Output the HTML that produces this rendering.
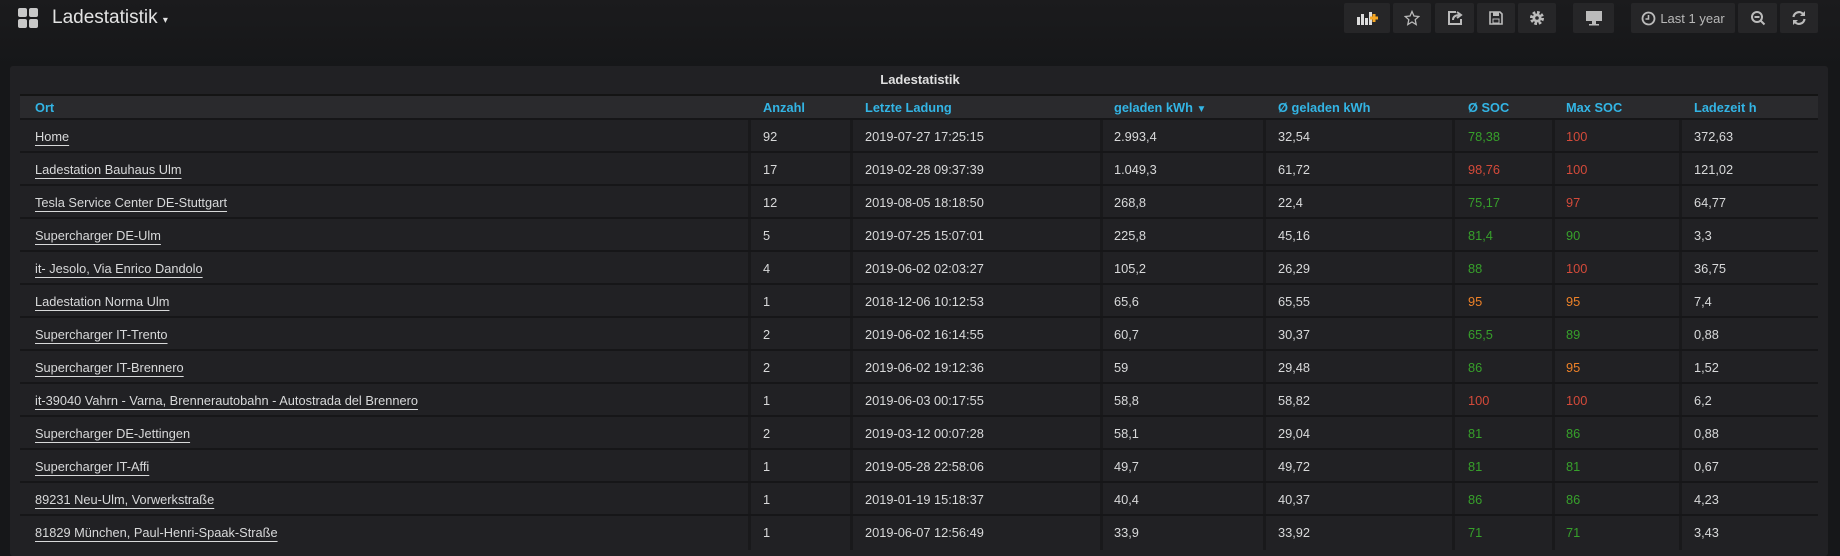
<!DOCTYPE html>
<html><head><meta charset="utf-8"><style>
*{margin:0;padding:0;box-sizing:border-box}
body{width:1840px;height:548px;overflow:hidden;background:#161719;font-family:"Liberation Sans",sans-serif;color:#d8d9da;position:relative}
.top{position:absolute;left:0;top:0;width:1840px;height:66px;background:linear-gradient(#1b1b1d,#161719)}
.logo{position:absolute;left:18px;top:8px;width:20px;height:20px}
.logo i{position:absolute;width:9px;height:9px;background:#c8c8c8;border-radius:2px}
.title{position:absolute;left:52px;top:7px;font-size:19px;color:#e3e3e3}
.btn{position:absolute;top:3px;height:30px;background:#262628;border-radius:2px;color:#b8b8b8;display:flex;align-items:center;justify-content:center;font-size:14px}
.panel{position:absolute;left:10px;top:66px;width:1818px;height:490px;background:#212124;border-radius:3px}
.ptitle{position:absolute;left:0;width:100%;top:72px;text-align:center;font-size:13px;font-weight:bold;color:#e0e0e0}
.hdr{position:absolute;left:20px;top:94px;width:1798px;height:24px;background:#2a2a2d;border-top:2px solid #141414}
.h{position:absolute;top:100px;font-size:12.8px;color:#33b5e5;font-weight:bold}
.row{position:absolute;left:20px;width:1798px;height:33px;border-top:2px solid #161618}
.c{position:absolute;font-size:12.8px;top:9px}
.vs{position:absolute;top:120px;width:3px;height:430px;background:#19191b}
.o{text-decoration:underline;text-underline-offset:4px}
.g{color:#37a02b}.r{color:#d44a3a}.y{color:#ed8128}
</style></head><body>
<div class="top"></div>
<div class="logo"><i style="left:0;top:0"></i><i style="left:11px;top:0"></i><i style="left:0;top:11px"></i><i style="left:11px;top:11px"></i></div>
<div class="title">Ladestatistik <span style="font-size:10px">▾</span></div>
<div class="btn" style="left:1344px;width:46px"><svg width="24" height="16"><rect x="2" y="7" width="3" height="8" fill="#ddd"/><rect x="6" y="4" width="3" height="11" fill="#ddd"/><rect x="10" y="8" width="3" height="7" fill="#ddd"/><rect x="14" y="2" width="3" height="13" fill="#ddd"/><path d="M19 4v8M15 8h8" stroke="#f5a623" stroke-width="3"/></svg></div>
<div class="btn" style="left:1393px;width:38px"><svg width="16" height="16"><path d="M8 1.5l2 4.5 4.8.5-3.6 3.2 1 4.8L8 12l-4.2 2.5 1-4.8L1.2 6.5 6 6z" fill="none" stroke="#bbb" stroke-width="1.3"/></svg></div>
<div class="btn" style="left:1435px;width:39px"><svg width="16" height="16"><path d="M9 2h-7v12h12v-5" fill="none" stroke="#bbb" stroke-width="2"/><path d="M6 10c0-4 3-5 7-5M10 2l4 3-4 3" fill="none" stroke="#bbb" stroke-width="2"/></svg></div>
<div class="btn" style="left:1477px;width:38px"><svg width="16" height="16"><path d="M2 2h10l2 2v10H2z" fill="none" stroke="#bbb" stroke-width="1.6"/><rect x="5" y="2" width="6" height="4" fill="#bbb"/><rect x="5" y="9" width="6" height="4" fill="none" stroke="#bbb"/></svg></div>
<div class="btn" style="left:1518px;width:38px"><svg width="16" height="16"><circle cx="8" cy="8" r="5.5" fill="none" stroke="#bbb" stroke-width="3" stroke-dasharray="2.6 1.7"/><circle cx="8" cy="8" r="4.5" fill="#bbb"/><circle cx="8" cy="8" r="1.8" fill="#262628"/></svg></div>
<div class="btn" style="left:1573px;width:41px"><svg width="20" height="16"><rect x="2" y="1" width="16" height="10" fill="#bbb"/><rect x="8" y="11" width="4" height="3" fill="#bbb"/><rect x="5" y="14" width="10" height="1.5" fill="#bbb"/></svg></div>
<div class="btn" style="left:1631px;width:104px;font-size:13px"><svg width="15" height="15" style="margin-right:4px"><circle cx="7.5" cy="7.5" r="6" fill="none" stroke="#bbb" stroke-width="1.8"/><path d="M7.5 4v4h-3" fill="none" stroke="#bbb" stroke-width="1.6"/></svg>Last 1 year</div>
<div class="btn" style="left:1738px;width:39px"><svg width="16" height="16"><circle cx="7" cy="7" r="5" fill="none" stroke="#bbb" stroke-width="2"/><path d="M4.5 7h5M10.5 10.5l4 4" stroke="#bbb" stroke-width="2"/></svg></div>
<div class="btn" style="left:1780px;width:38px"><svg width="16" height="16"><path d="M2.5 7a5.5 5.5 0 0 1 10-2.5M13.5 9a5.5 5.5 0 0 1-10 2.5" fill="none" stroke="#bbb" stroke-width="2.2"/><path d="M14 1v5h-5zM2 15v-5h5z" fill="#bbb"/></svg></div>
<div class="panel"></div>
<div class="ptitle">Ladestatistik</div>
<div class="hdr"></div>
<div class="h" style="left:35px">Ort</div>
<div class="h" style="left:763px">Anzahl</div>
<div class="h" style="left:865px">Letzte Ladung</div>
<div class="h" style="left:1114px">geladen kWh <span style="font-size:10px">▼</span></div>
<div class="h" style="left:1278px">Ø geladen kWh</div>
<div class="h" style="left:1468px">Ø SOC</div>
<div class="h" style="left:1566px">Max SOC</div>
<div class="h" style="left:1694px">Ladezeit h</div>
<div class="vs" style="left:748px"></div><div class="vs" style="left:850px"></div><div class="vs" style="left:1100px"></div><div class="vs" style="left:1263px"></div><div class="vs" style="left:1452px"></div><div class="vs" style="left:1552px"></div><div class="vs" style="left:1679px"></div>
<div class="row" style="top:118px"><div class="c o" style="left:15px">Home</div><div class="c" style="left:743px">92</div><div class="c" style="left:845px">2019-07-27 17:25:15</div><div class="c" style="left:1094px">2.993,4</div><div class="c" style="left:1258px">32,54</div><div class="c g" style="left:1448px">78,38</div><div class="c r" style="left:1546px">100</div><div class="c" style="left:1674px">372,63</div></div>
<div class="row" style="top:151px"><div class="c o" style="left:15px">Ladestation Bauhaus Ulm</div><div class="c" style="left:743px">17</div><div class="c" style="left:845px">2019-02-28 09:37:39</div><div class="c" style="left:1094px">1.049,3</div><div class="c" style="left:1258px">61,72</div><div class="c r" style="left:1448px">98,76</div><div class="c r" style="left:1546px">100</div><div class="c" style="left:1674px">121,02</div></div>
<div class="row" style="top:184px"><div class="c o" style="left:15px">Tesla Service Center DE-Stuttgart</div><div class="c" style="left:743px">12</div><div class="c" style="left:845px">2019-08-05 18:18:50</div><div class="c" style="left:1094px">268,8</div><div class="c" style="left:1258px">22,4</div><div class="c g" style="left:1448px">75,17</div><div class="c r" style="left:1546px">97</div><div class="c" style="left:1674px">64,77</div></div>
<div class="row" style="top:217px"><div class="c o" style="left:15px">Supercharger DE-Ulm</div><div class="c" style="left:743px">5</div><div class="c" style="left:845px">2019-07-25 15:07:01</div><div class="c" style="left:1094px">225,8</div><div class="c" style="left:1258px">45,16</div><div class="c g" style="left:1448px">81,4</div><div class="c g" style="left:1546px">90</div><div class="c" style="left:1674px">3,3</div></div>
<div class="row" style="top:250px"><div class="c o" style="left:15px">it- Jesolo, Via Enrico Dandolo</div><div class="c" style="left:743px">4</div><div class="c" style="left:845px">2019-06-02 02:03:27</div><div class="c" style="left:1094px">105,2</div><div class="c" style="left:1258px">26,29</div><div class="c g" style="left:1448px">88</div><div class="c r" style="left:1546px">100</div><div class="c" style="left:1674px">36,75</div></div>
<div class="row" style="top:283px"><div class="c o" style="left:15px">Ladestation Norma Ulm</div><div class="c" style="left:743px">1</div><div class="c" style="left:845px">2018-12-06 10:12:53</div><div class="c" style="left:1094px">65,6</div><div class="c" style="left:1258px">65,55</div><div class="c y" style="left:1448px">95</div><div class="c y" style="left:1546px">95</div><div class="c" style="left:1674px">7,4</div></div>
<div class="row" style="top:316px"><div class="c o" style="left:15px">Supercharger IT-Trento</div><div class="c" style="left:743px">2</div><div class="c" style="left:845px">2019-06-02 16:14:55</div><div class="c" style="left:1094px">60,7</div><div class="c" style="left:1258px">30,37</div><div class="c g" style="left:1448px">65,5</div><div class="c g" style="left:1546px">89</div><div class="c" style="left:1674px">0,88</div></div>
<div class="row" style="top:349px"><div class="c o" style="left:15px">Supercharger IT-Brennero</div><div class="c" style="left:743px">2</div><div class="c" style="left:845px">2019-06-02 19:12:36</div><div class="c" style="left:1094px">59</div><div class="c" style="left:1258px">29,48</div><div class="c g" style="left:1448px">86</div><div class="c y" style="left:1546px">95</div><div class="c" style="left:1674px">1,52</div></div>
<div class="row" style="top:382px"><div class="c o" style="left:15px">it-39040 Vahrn - Varna, Brennerautobahn - Autostrada del Brennero</div><div class="c" style="left:743px">1</div><div class="c" style="left:845px">2019-06-03 00:17:55</div><div class="c" style="left:1094px">58,8</div><div class="c" style="left:1258px">58,82</div><div class="c r" style="left:1448px">100</div><div class="c r" style="left:1546px">100</div><div class="c" style="left:1674px">6,2</div></div>
<div class="row" style="top:415px"><div class="c o" style="left:15px">Supercharger DE-Jettingen</div><div class="c" style="left:743px">2</div><div class="c" style="left:845px">2019-03-12 00:07:28</div><div class="c" style="left:1094px">58,1</div><div class="c" style="left:1258px">29,04</div><div class="c g" style="left:1448px">81</div><div class="c g" style="left:1546px">86</div><div class="c" style="left:1674px">0,88</div></div>
<div class="row" style="top:448px"><div class="c o" style="left:15px">Supercharger IT-Affi</div><div class="c" style="left:743px">1</div><div class="c" style="left:845px">2019-05-28 22:58:06</div><div class="c" style="left:1094px">49,7</div><div class="c" style="left:1258px">49,72</div><div class="c g" style="left:1448px">81</div><div class="c g" style="left:1546px">81</div><div class="c" style="left:1674px">0,67</div></div>
<div class="row" style="top:481px"><div class="c o" style="left:15px">89231 Neu-Ulm, Vorwerkstraße</div><div class="c" style="left:743px">1</div><div class="c" style="left:845px">2019-01-19 15:18:37</div><div class="c" style="left:1094px">40,4</div><div class="c" style="left:1258px">40,37</div><div class="c g" style="left:1448px">86</div><div class="c g" style="left:1546px">86</div><div class="c" style="left:1674px">4,23</div></div>
<div class="row" style="top:514px"><div class="c o" style="left:15px">81829 München, Paul-Henri-Spaak-Straße</div><div class="c" style="left:743px">1</div><div class="c" style="left:845px">2019-06-07 12:56:49</div><div class="c" style="left:1094px">33,9</div><div class="c" style="left:1258px">33,92</div><div class="c g" style="left:1448px">71</div><div class="c g" style="left:1546px">71</div><div class="c" style="left:1674px">3,43</div></div>
</body></html>
